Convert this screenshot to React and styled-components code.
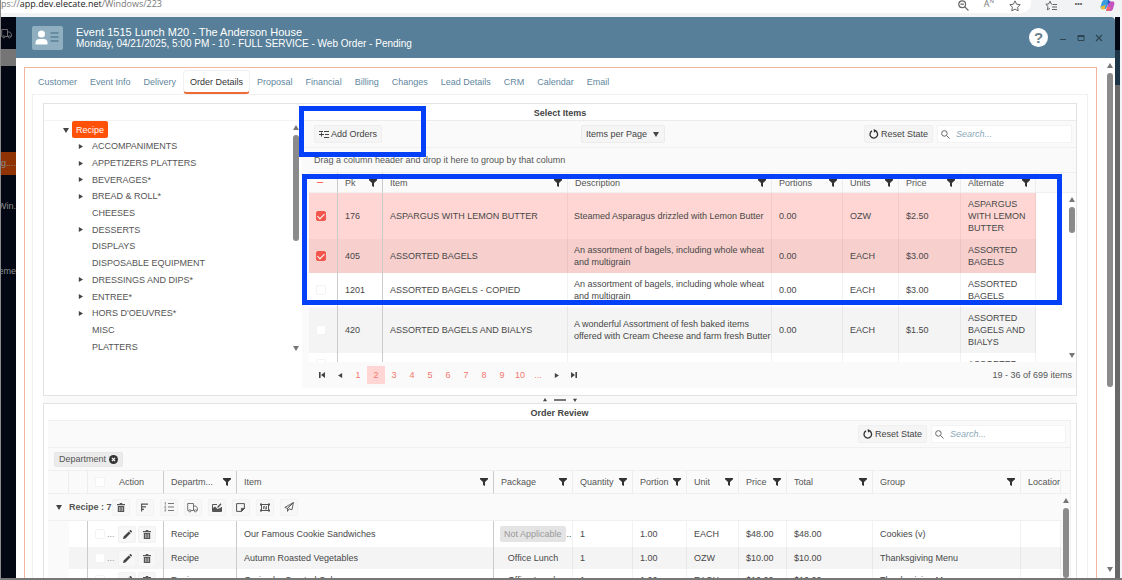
import React from "react";
import styled, { createGlobalStyle, css } from "styled-components";

const GlobalStyle = createGlobalStyle`
  * {
    box-sizing: border-box;
  }
  body {
    margin: 0;
    font-family: "Liberation Sans", Arial, sans-serif;
    font-size: 9px;
    line-height: 12px;
    color: #555;
    background: #fff;
  }
  button, input, select {
    font: inherit;
    color: inherit;
  }
`;

const tabs = [
  "Customer",
  "Event Info",
  "Delivery",
  "Order Details",
  "Proposal",
  "Financial",
  "Billing",
  "Changes",
  "Lead Details",
  "CRM",
  "Calendar",
  "Email",
];

const categories = [
  { name: "ACCOMPANIMENTS", open: true },
  { name: "APPETIZERS PLATTERS", open: true },
  { name: "BEVERAGES*", open: true },
  { name: "BREAD & ROLL*", open: true },
  { name: "CHEESES" },
  { name: "DESSERTS", open: true },
  { name: "DISPLAYS" },
  { name: "DISPOSABLE EQUIPMENT" },
  { name: "DRESSINGS AND DIPS*", open: true },
  { name: "ENTREE*", open: true },
  { name: "HORS D'OEUVRES*", open: true },
  { name: "MISC" },
  { name: "PLATTERS" },
];

const items = [
  {
    pk: "176",
    item: "ASPARGUS WITH LEMON BUTTER",
    description: ["Steamed Asparagus drizzled with Lemon Butter"],
    units: "OZW",
    price: "$2.50",
    alternate: ["ASPARGUS", "WITH LEMON", "BUTTER"],
    selected: true,
  },
  {
    pk: "405",
    item: "ASSORTED BAGELS",
    description: ["An assortment of bagels, including whole wheat", "and multigrain"],
    units: "EACH",
    price: "$3.00",
    alternate: ["ASSORTED", "BAGELS"],
    selected: true,
  },
  {
    pk: "1201",
    item: "ASSORTED BAGELS - COPIED",
    description: ["An assortment of bagels, including whole wheat", "and multigrain"],
    units: "EACH",
    price: "$3.00",
    alternate: ["ASSORTED", "BAGELS"],
  },
  {
    pk: "420",
    item: "ASSORTED BAGELS AND BIALYS",
    description: ["A wonderful Assortment of fesh baked items", "offered with Cream Cheese and farm fresh Butter"],
    units: "EACH",
    price: "$1.50",
    alternate: ["ASSORTED", "BAGELS AND", "BIALYS"],
  },
  { pk: "", item: "", description: [], units: "", price: "", alternate: ["ASSORTED"] },
];

const orders = [
  { item: "Our Famous Cookie Sandwiches", unit: "EACH", price: "$48.00", group: "Cookies (v)", locked: true },
  { item: "Autumn Roasted Vegetables", unit: "OZW", price: "$10.00", group: "Thanksgiving Menu" },
  { item: "Grains by Crusted Cakes", unit: "EACH", price: "$10.00", group: "Thanksgiving Menu" },
];

const pages = ["1", "2", "3", "4", "5", "6", "7", "8", "9", "10", "..."];

/* icons */

const FilterIcon = () => (
  <svg width="8" height="8" viewBox="0 0 8 8" fill="#333" aria-hidden="true">
    <path d="M0 0h8v1.2L5 4v4L3 7V4L0 1.2z" />
  </svg>
);

const Caret = ({ dir = "right", size = 5, color = "#444" }) => {
  const paths = {
    right: "M1 0l5 3-5 3z",
    left: "M5 0L0 3l5 3z",
    down: "M0 1h6L3 6z",
    up: "M0 5h6L3 0z",
  };
  return (
    <svg width={size} height={size} viewBox="0 0 6 6" fill={color} aria-hidden="true">
      <path d={paths[dir]} />
    </svg>
  );
};

const EndIcon = ({ flip }) => (
  <svg width="6" height="6" viewBox="0 0 6 6" fill="#444" aria-hidden="true">
    <path d={flip ? "M0 0l4 3-4 3zM4.4 0H6v6H4.4z" : "M6 0L2 3l4 3zM0 0h1.6v6H0z"} />
  </svg>
);

const ResetIcon = () => (
  <svg width="10" height="10" viewBox="0 0 10 10" fill="none" stroke="#333" strokeWidth="1.3" aria-hidden="true">
    <path d="M6.6 1.9A3.8 3.8 0 1 1 3 1.9" />
    <path d="M4.6 0L7.6 1.6 5 3.8z" fill="#333" stroke="none" />
  </svg>
);

const SearchIcon = ({ minus, size = 9 }) => (
  <svg width={size} height={size} viewBox="0 0 10 10" fill="none" stroke="#666" strokeWidth="1.1" aria-hidden="true">
    <circle cx="3.8" cy="3.8" r="3.1" />
    <path d={minus ? "M6.2 6.2L9.5 9.5M2.2 3.8h3.2" : "M6.2 6.2L9.5 9.5"} />
  </svg>
);

const AddIcon = () => (
  <svg width="10" height="9" viewBox="0 0 10 9" fill="none" stroke="#444" aria-hidden="true">
    <path d="M5 1.5h5M6 4.5h4M5 7.5h5M0 1.5h4M0 4.5h5" />
    <path d="M2.5 2.5v4" />
  </svg>
);

const TrashIcon = () => (
  <svg width="8" height="9" viewBox="0 0 8 9" aria-hidden="true">
    <path d="M0 1h2.5L3 0h2l.5 1H8v1.2H0zM.8 3h6.4v6H.8z" fill="#555" />
    <path d="M2.5 4v4M4 4v4M5.5 4v4" stroke="#ddd" strokeWidth=".6" />
  </svg>
);

const PencilIcon = () => (
  <svg width="9" height="9" viewBox="0 0 9 9" fill="#444" aria-hidden="true">
    <path d="M0 9l.6-2.4L5.8 1.4l1.8 1.8-5.2 5.2zM6.3.9L7.1.1c.3-.2.6-.1.8.1l.9.9c.2.2.2.5 0 .8l-.7.8z" />
  </svg>
);

const TruckIcon = ({ size = 11, color = "#666" }) => (
  <svg width={size} height={size} viewBox="0 0 11 11" fill="none" stroke={color} strokeWidth=".9" aria-hidden="true">
    <path d="M1.5 8.5H.7V1.5h5.8v7H4M6.5 4h2.3l1.6 2v2.5H9.6M6.5 8.5h.8" />
    <circle cx="2.8" cy="8.8" r="1.1" />
    <circle cx="8.4" cy="8.8" r="1.1" />
  </svg>
);

const SortIcon = () => (
  <svg width="9" height="9" viewBox="0 0 9 9" stroke="#555" strokeWidth="1.2" aria-hidden="true">
    <path d="M1 1.2h7M1 3.8h5M1 6.4h3M1.6 1v7.5" />
  </svg>
);

const ListIcon = () => (
  <svg width="10" height="10" viewBox="0 0 10 10" fill="none" stroke="#777" aria-hidden="true">
    <path d="M4 1.5h6M4 5h6M4 8.5h6" />
    <path d="M.5 1L1.5.5v2.3M.5 4h1.3L.6 5.8h1.5M.5 7.3h1.4L1 8.3c1.4.2.8 1.3-.4 1" strokeWidth=".7" />
  </svg>
);

const PictureIcon = () => (
  <svg width="10" height="9" viewBox="0 0 10 9" fill="none" stroke="#555" aria-hidden="true">
    <path d="M5 1.5H.5v7h9V4" />
    <path d="M1 8V5l2-1.5L5.5 6 9 4.500V8z" fill="#555" stroke="none" />
    <path d="M5.5 4.500L9 .8" strokeWidth="1.400" />
  </svg>
);

const NoteIcon = () => (
  <svg width="9" height="9" viewBox="0 0 9 9" fill="none" stroke="#555" aria-hidden="true">
    <path d="M.6.6h7.8v5L5.6 8.4h-5z" />
    <path d="M8.4 5.4H5.4v3z" fill="#555" />
  </svg>
);

const FrameIcon = () => (
  <svg width="10" height="9" viewBox="0 0 10 9" fill="none" stroke="#555" aria-hidden="true">
    <path d="M1.5 1.5h7v6h-7z" />
    <path d="M0 .5h2v2H0zM8 .5h2v2H8zM0 6.5h2v2H0zM8 6.5h2v2H8z" fill="#555" stroke="none" />
    <path d="M3.5 6V3.5h1.5V6h1.5V3" strokeWidth=".8" />
  </svg>
);

const SendIcon = () => (
  <svg width="10" height="10" viewBox="0 0 10 10" fill="none" stroke="#555" strokeWidth=".9" aria-hidden="true">
    <path d="M9.4.6L.8 5.4l2.5 1L9.4.6 8 7.8 5 6.8 3.5 9.4V6.4z" />
  </svg>
);

const CardIcon = () => (
  <svg width="31" height="24" viewBox="0 0 31 24" aria-hidden="true">
    <rect width="31" height="24" rx="2" fill="#8fafc1" />
    <circle cx="9.5" cy="8" r="3.5" fill="#fff" />
    <path d="M3.500 18.500v-2c0-2.500 2-3.500 4-3.500h4c2 0 4 1 4 3.500v2z" fill="#fff" />
    <path d="M18.500 7h8M18.500 11h8M18.500 15h8" stroke="#5b8198" strokeWidth="1.500" />
  </svg>
);

const StarIcon = ({ lines }) => (
  <svg width="12" height="12" viewBox="0 0 12 12" fill="none" stroke="#555" strokeWidth=".9" aria-hidden="true">
    <path
      d={
        lines
          ? "M7 4.2L6.2 3.9 5 1.2 3.7 3.9l-2.9.4L3 6.4l-.6 3.4L5 8.4M7.5 4.5H12M7 7h5M7 9.5h5"
          : "M6 .9l1.6 3.3 3.6.5-2.6 2.5.6 3.6L6 9.1l-3.2 1.7.6-3.6L.8 4.7l3.6-.5z"
      }
    />
  </svg>
);

const CopilotIcon = () => (
  <svg width="15" height="13" viewBox="0 2 15 13" aria-hidden="true">
    <path d="M4 2h5L7 9 5.5 11H2C0 11 .5 8 1.500 5.500 2 3.500 3 2 4 2z" fill="#3b9be0" />
    <path d="M1 8.500L5.500 7 4.500 11.500H2.500C1 11.500.6 10 1 8.500z" fill="#e9bd35" />
    <path d="M9.500 3.500H13c2 0 1.500 3 .5 5.500-.5 2.500-1.500 4-3 4H6l2-7z" fill="#c553c0" />
    <path d="M6 13l1.200-4h3.300l-1 4z" fill="#f0686a" />
    <path d="M8 2c1.500 0 1.500 1.500 2.500 1.700L8.500 6 7.500 7z" fill="#2a55c7" />
  </svg>
);

const ClearIcon = () => (
  <svg width="9" height="9" viewBox="0 0 9 9" aria-hidden="true">
    <circle cx="4.5" cy="4.5" r="4.5" fill="#333" />
    <path d="M2.900 2.900l3.200 3.200M6.100 2.900L2.900 6.100" stroke="#fff" strokeWidth="1.200" />
  </svg>
);

const Head = ({ children, filter = true, ...rest }) => (
  <HeadCell {...rest}>
    <HeadInner>
      <HeadLabel>{children}</HeadLabel>
      {filter && <FilterIcon />}
    </HeadInner>
  </HeadCell>
);

const Lines = ({ text }) => text.map((line) => <Line key={line}>{line}</Line>);

const ToolbarTools = ({ id }) => (
  <Tools>
    <ToolButton type="button">
      <ResetIcon />
      Reset State
    </ToolButton>
    <SearchLabel htmlFor={id}>
      <SearchIcon />
      <SearchInput id={id} type="search" placeholder="Search..." aria-label="Search" />
    </SearchLabel>
  </Tools>
);

function SelectItems() {
  return (
    <Pane>
      <PaneTitle>Select Items</PaneTitle>
      <Split>
        <TreePane>
          <Tree>
            <TreeNode>
              <Caret dir="down" size={6} />
              <Root type="button">Recipe</Root>
            </TreeNode>
            {categories.map(({ name, open }) => (
              <TreeNode key={name} $child>
                <CaretSlot>{open && <Caret />}</CaretSlot>
                {name}
              </TreeNode>
            ))}
          </Tree>
          <ScrollRail $width={12}>
            <Caret dir="up" size={6} color="#777" />
            <Thumb $height={106} />
            <Caret dir="down" size={6} color="#777" />
          </ScrollRail>
        </TreePane>
        <GridPane>
          <Toolbar>
            <ToolButton type="button">
              <AddIcon />
              Add Orders
            </ToolButton>
            <SelectWrap>
              <PageSelect aria-label="Items per Page">
                <option>Items per Page</option>
              </PageSelect>
              <Caret dir="down" size={6} />
            </SelectWrap>
            <ToolbarTools id="item-search" />
          </Toolbar>
          <GroupHint>Drag a column header and drop it here to group by that column</GroupHint>
          <ItemViewport>
            <Table>
              <colgroup>
                <Col $width={29} />
                <Col $width={45} />
                <Col />
                <Col $width={204} />
                <Col $width={71} />
                <Col $width={56} />
                <Col $width={62} />
                <Col $width={75} />
              </colgroup>
              <thead>
                <HeadRow>
                  <HeadCell $strong>
                    <Dash />
                  </HeadCell>
                  <Head $strong>Pk</Head>
                  <Head>Item</Head>
                  <Head>Description</Head>
                  <Head>Portions</Head>
                  <Head>Units</Head>
                  <Head>Price</Head>
                  <Head>Alternate</Head>
                </HeadRow>
              </thead>
              <tbody>
                {items.map((row, i) => (
                  <ItemRow key={i} $selected={row.selected} $alt={i % 2 === 1}>
                    <Cell $strong>
                      <Check type="checkbox" defaultChecked={row.selected} aria-label={row.item || "Item"} />
                    </Cell>
                    <Cell $strong>{row.pk}</Cell>
                    <Cell>{row.item}</Cell>
                    <Cell $tight>
                      <Lines text={row.description} />
                    </Cell>
                    <Cell>{row.pk && "0.00"}</Cell>
                    <Cell>{row.units}</Cell>
                    <Cell>{row.price}</Cell>
                    <Cell>
                      <Lines text={row.alternate} />
                    </Cell>
                  </ItemRow>
                ))}
              </tbody>
            </Table>
            <ItemRail>
              <RailHead />
              <ScrollRail $width={9}>
                <Caret dir="up" size={6} color="#777" />
                <Thumb $height={26} />
                <Caret dir="down" size={6} color="#777" />
              </ScrollRail>
            </ItemRail>
          </ItemViewport>
          <Pager>
            <PageButton type="button" aria-label="First page">
              <EndIcon />
            </PageButton>
            <PageButton type="button" aria-label="Previous page">
              <Caret dir="left" />
            </PageButton>
            {pages.map((page) => (
              <PageButton type="button" key={page} $current={page === "2"}>
                {page}
              </PageButton>
            ))}
            <PageButton type="button" aria-label="Next page">
              <Caret />
            </PageButton>
            <PageButton type="button" aria-label="Last page">
              <EndIcon flip />
            </PageButton>
            <PageInfo>19 - 36 of 699 items</PageInfo>
          </Pager>
        </GridPane>
      </Split>
    </Pane>
  );
}

function OrderReview() {
  return (
    <Pane $last>
      <PaneTitle>Order Review</PaneTitle>
      <ReviewGrid>
        <Toolbar $end>
          <ToolbarTools id="order-search" />
        </Toolbar>
        <ChipRow>
          <Chip type="button">
            Department
            <ClearIcon />
          </Chip>
        </ChipRow>
        <ReviewBody>
          <Table>
            <colgroup>
              <Col $width={21} />
              <Col $width={19} />
              <Col $width={76} />
              <Col $width={73} />
              <Col />
              <Col $width={79} />
              <Col $width={60} />
              <Col $width={54} />
              <Col $width={52} />
              <Col $width={48} />
              <Col $width={86} />
              <Col $width={148} />
              <Col $width={40} />
            </colgroup>
            <thead>
              <HeadRow $tall>
                <HeadCell />
                <HeadCell />
                <HeadCell $strong>
                  <Actions>
                    <Check type="checkbox" aria-label="Select all" />
                    <ActionTitle>Action</ActionTitle>
                  </Actions>
                </HeadCell>
                <Head $strong>Departm...</Head>
                <Head $strong>Item</Head>
                <Head>Package</Head>
                <Head>Quantity</Head>
                <Head>Portion</Head>
                <Head>Unit</Head>
                <Head>Price</Head>
                <Head>Total</Head>
                <Head>Group</Head>
                <Head $flush filter={false}>Location</Head>
              </HeadRow>
            </thead>
            <tbody>
              <tr>
                <GroupCell colSpan={13}>
                  <GroupBar>
                    <Caret dir="down" size={6} />
                    <GroupName>Recipe : 7</GroupName>
                    <GroupTools>
                      <IconButton type="button" aria-label="Delete"><TrashIcon /></IconButton>
                      <IconButton type="button" aria-label="Sort"><SortIcon /></IconButton>
                      <IconButton type="button" aria-label="List"><ListIcon /></IconButton>
                      <IconButton type="button" aria-label="Delivery"><TruckIcon /></IconButton>
                      <IconButton type="button" aria-label="Edit picture"><PictureIcon /></IconButton>
                      <IconButton type="button" aria-label="Note"><NoteIcon /></IconButton>
                      <IconButton type="button" aria-label="Group"><FrameIcon /></IconButton>
                      <IconButton type="button" aria-label="Send"><SendIcon /></IconButton>
                    </GroupTools>
                  </GroupBar>
                </GroupCell>
              </tr>
              {orders.map((row, i) => (
                <OrderRow key={row.item} $alt={i % 2 === 1} $tall={row.locked}>
                  <IndentCell />
                  <Cell $strong />
                  <Cell $strong>
                    <Actions>
                      <Check type="checkbox" aria-label={row.item} />
                      <Dots>...</Dots>
                      <IconButton type="button" aria-label="Edit"><PencilIcon /></IconButton>
                      <IconButton type="button" aria-label="Delete"><TrashIcon /></IconButton>
                    </Actions>
                  </Cell>
                  <Cell $strong>Recipe</Cell>
                  <Cell $strong>{row.item}</Cell>
                  <Cell $tight>
                    {row.locked ? (
                      <Package>
                        <Locked type="button" disabled>Not Applicable</Locked>..
                      </Package>
                    ) : (
                      <PackageText>Office Lunch</PackageText>
                    )}
                  </Cell>
                  <Cell>1</Cell>
                  <Cell>1.00</Cell>
                  <Cell>{row.unit}</Cell>
                  <Cell>{row.price}</Cell>
                  <Cell>{row.price}</Cell>
                  <Cell>{row.group}</Cell>
                  <Cell />
                </OrderRow>
              ))}
            </tbody>
          </Table>
          <ReviewRail>
            <RailHead $review />
            <ScrollRail $width={9}>
              <Caret dir="up" size={6} color="#777" />
              <Thumb />
            </ScrollRail>
          </ReviewRail>
        </ReviewBody>
      </ReviewGrid>
    </Pane>
  );
}

export default function App() {
  return (
    <>
      <GlobalStyle />
      <Page>
        <Browser>
          <Address>
            <span>ps://<Host>app.dev.elecate.net</Host>/Windows/223</span>
            <AddressIcons>
              <SearchIcon minus size={11} />
              <span>A<sup>N</sup></span>
              <StarIcon />
            </AddressIcons>
          </Address>
          <BrowserIcons>
            <StarIcon lines />
            <Ellipsis>•••</Ellipsis>
            <CopilotIcon />
          </BrowserIcons>
        </Browser>
        <Desktop>
          <Sidebar>
            <SideTop>
              <TruckIcon size={13} color="#777" />
            </SideTop>
            <SideStrip />
            <SideItem $gap={86} $active>g....</SideItem>
            <SideItem $gap={20}>Win.</SideItem>
            <SideItem $gap={42}>eme</SideItem>
          </Sidebar>
          <Window>
            <TitleBar>
              <CardIcon />
              <Titles>
                <EventName>Event 1515 Lunch M20 - The Anderson House</EventName>
                <EventMeta>Monday, 04/21/2025, 5:00 PM - 10 - FULL SERVICE - Web Order - Pending</EventMeta>
              </Titles>
              <Help type="button">?</Help>
              <WindowButton type="button" aria-label="Minimize">
                <svg width="8" height="8" viewBox="0 0 8 8" stroke="#2d4452"><path d="M1 5.500h6" /></svg>
              </WindowButton>
              <WindowButton type="button" aria-label="Maximize">
                <svg width="8" height="8" viewBox="0 0 8 8" fill="none" stroke="#2d4452"><path d="M1 1.500h6v5H1zM1 2.500h6" /></svg>
              </WindowButton>
              <WindowButton type="button" aria-label="Close">
                <svg width="8" height="8" viewBox="0 0 8 8" stroke="#2d4452" strokeWidth="1.200"><path d="M1 1l6 6M7 1L1 7" /></svg>
              </WindowButton>
            </TitleBar>
            <WindowBody>
              <Frame>
                <Tabs role="tablist">
                  {tabs.map((tab) => (
                    <Tab key={tab} type="button" role="tab" $active={tab === "Order Details"}>
                      {tab}
                    </Tab>
                  ))}
                </Tabs>
                <Panel>
                  <SelectItems />
                  <Splitter>
                    <Caret dir="up" size={4} />
                    <Grip />
                    <Caret dir="down" size={4} />
                  </Splitter>
                  <OrderReview />
                </Panel>
              </Frame>
              <ScrollRail $width={18} $tail>
                <Caret dir="up" size={6} color="#777" />
                <Thumb $height={314} />
                <Caret dir="down" size={6} color="#777" />
              </ScrollRail>
            </WindowBody>
          </Window>
          <Backdrop />
        </Desktop>
        <Highlight $left={299} $top={106} $right={696} $height={51} />
        <Highlight $left={302} $top={174} $right={60} $height={131} />
      </Page>
    </>
  );
}

/* page */

const Page = styled.div`
  position: relative;
  display: flex;
  flex-direction: column;
  height: 100vh;
  overflow: hidden;
  border-left: 1px solid #8b8b8b;
  border-bottom: 2px solid #777;
`;

const Highlight = styled.div`
  position: absolute;
  left: ${(p) => p.$left - 1}px;
  right: ${(p) => p.$right}px;
  top: ${(p) => p.$top}px;
  height: ${(p) => p.$height}px;
  border: 5px solid #0440f8;
  pointer-events: none;
`;

const Browser = styled.div`
  display: flex;
  flex: none;
  height: 17px;
  padding-bottom: 4px;
  background: #f1f3f5;
`;

const Address = styled.div`
  display: flex;
  flex: 1;
  align-items: flex-start;
  justify-content: space-between;
  padding-right: 10px;
  border-radius: 0 0 10px 0;
  background: #fff;
  color: #777;
  font-family: "Open Sans", sans-serif;
  font-size: 9px;
  line-height: 8px;
`;

const Host = styled.span`
  color: #222;
`;

const AddressIcons = styled.div`
  display: flex;
  align-items: flex-start;
  gap: 15px;

  sup {
    font-size: 6px;
    line-height: 0;
  }
`;

const BrowserIcons = styled.div`
  display: flex;
  align-items: flex-start;
  justify-content: space-between;
  width: 91px;
  padding: 0 7px 0 14px;
`;

const Ellipsis = styled.span`
  font-size: 7px;
  line-height: 8px;
`;

const Desktop = styled.div`
  display: flex;
  flex: 1;
  min-height: 0;
`;

const Sidebar = styled.nav`
  display: flex;
  flex: none;
  flex-direction: column;
  width: 15px;
  overflow: hidden;
  background: #020713;
`;

const SideTop = styled.div`
  display: flex;
  justify-content: flex-end;
  align-items: center;
  height: 32px;
  padding-right: 4px;
`;

const SideStrip = styled.div`
  height: 17px;
  background: #757575;
`;

const SideItem = styled.div`
  display: flex;
  justify-content: flex-end;
  margin-top: ${(p) => p.$gap}px;
  height: 23px;
  line-height: 23px;
  color: #8d8d8d;
  background: ${(p) => (p.$active ? "#8f3204" : "transparent")};
`;

const Window = styled.section`
  display: flex;
  flex: 1;
  flex-direction: column;
  min-width: 0;
  background: #fff;
`;

const Backdrop = styled.div`
  width: 7px;
  border-right: 2px solid #f3f6f8;
  background: linear-gradient(#020713 0 33px, #1d3446 33px 68px, #686868 68px);
`;

const TitleBar = styled.header`
  display: flex;
  flex: none;
  align-items: center;
  height: 41px;
  padding: 0 7px 0 16px;
  border-radius: 0 4px 0 0;
  background: #577f99;
`;

const Titles = styled.div`
  flex: 1;
  padding-left: 13px;
  color: #fff;
  line-height: 12px;
`;

const EventName = styled.div`
  font-size: 11px;
`;

const EventMeta = styled.div`
  font-size: 10px;
`;

const Help = styled.button`
  width: 19px;
  height: 19px;
  margin-right: 6px;
  padding: 0;
  border: 0;
  border-radius: 50%;
  background: #fff;
  color: #6d7f8a;
  font-size: 15px;
  font-weight: bold;
  line-height: 19px;
`;

const WindowButton = styled.button`
  display: flex;
  justify-content: center;
  width: 18px;
  padding: 0;
  border: 0;
  background: none;
`;

const WindowBody = styled.div`
  display: flex;
  flex: 1;
  min-height: 0;
  padding-left: 8px;
`;

const Frame = styled.div`
  display: flex;
  flex: 1;
  flex-direction: column;
  min-width: 0;
  margin-top: 9px;
  padding: 2px 8px 0 7px;
  border: 1px solid #f3b59d;
  border-bottom: 0;
`;

const Tabs = styled.div`
  display: flex;
  flex: none;
  gap: 1px;
  height: 24px;
`;

const Tab = styled.button`
  padding: 0 6px;
  border: 1px solid transparent;
  border-width: 1px 0 2px;
  background: none;
  color: #5f87a0;
  white-space: nowrap;
  ${(p) =>
    p.$active &&
    css`
      border: 1px solid #f1f1f1;
      border-bottom: 2px solid #ee6a35;
      border-radius: 4px;
      color: #333;
    `}
`;

const Panel = styled.div`
  display: flex;
  flex: 1;
  flex-direction: column;
  min-height: 0;
  padding: 8px 10px 0;
  border: 1px solid #f0f0f0;
  border-bottom: 0;
`;

const Pane = styled.section`
  display: flex;
  flex-direction: column;
  border: 1px solid #e3e3e3;
  ${(p) =>
    p.$last
      ? css`
          flex: 1;
          min-height: 0;
          padding: 0 5px 0 4px;
          border-bottom: 0;
        `
      : css`
          flex: none;
          padding-bottom: 7px;
        `}
`;

const PaneTitle = styled.h2`
  flex: none;
  height: 16px;
  margin: 0;
  color: #444;
  font-size: 9px;
  line-height: 18px;
  text-align: center;
`;

const Split = styled.div`
  display: flex;
`;

/* tree */

const TreePane = styled.div`
  display: flex;
  flex: none;
  width: 258px;
  height: 235px;
  border-top: 1px solid #f3f3f3;
`;

const Tree = styled.ul`
  display: flex;
  flex: 1;
  flex-direction: column;
  margin: 0;
  padding: 0 0 0 19px;
  list-style: none;
`;

const TreeNode = styled.li`
  display: flex;
  flex: 1;
  align-items: center;
  gap: ${(p) => (p.$child ? 8 : 3)}px;
  padding-left: ${(p) => (p.$child ? 15 : 0)}px;
`;

const CaretSlot = styled.span`
  display: flex;
  width: 6px;
`;

const Root = styled.button`
  height: 17px;
  padding: 0 4px;
  border: 0;
  border-radius: 2px;
  background: #ff5208;
  color: #fff;
`;

/* scroll rails */

const ScrollRail = styled.div`
  display: flex;
  flex: none;
  flex-direction: column;
  align-items: center;
  gap: 4px;
  width: ${(p) => p.$width}px;
  padding: ${(p) => (p.$tail ? "5px 0 6px 8px" : "4px 0")};

  svg:last-child {
    margin-top: auto;
  }
`;

const Thumb = styled.div`
  flex: ${(p) => (p.$height ? "none" : 1)};
  width: 6px;
  height: ${(p) => p.$height}px;
  border-radius: 3px;
  background: #8b8b8b;
`;

/* grids */

const GridPane = styled.div`
  flex: 1;
  min-width: 0;
  border-top: 1px solid #ececec;
  background: #fafafa;
`;

const Toolbar = styled.div`
  display: flex;
  flex: none;
  align-items: center;
  justify-content: ${(p) => (p.$end ? "flex-end" : "space-between")};
  height: 27px;
  padding: 0 4px 0 12px;
  border-bottom: 1px solid #f0f0f0;
`;

const Tools = styled.div`
  display: flex;
  gap: 4px;
`;

const ToolButton = styled.button`
  display: flex;
  align-items: center;
  gap: 2px;
  height: 18px;
  padding: 0 4px;
  border: 1px solid #efefef;
  border-radius: 2px;
  background: #f5f5f5;
  color: #444;
`;

const SelectWrap = styled.div`
  display: flex;
  align-items: center;
  height: 18px;
  padding-right: 5px;
  border: 1px solid #ebebeb;
  border-radius: 2px;
  background: #f5f5f5;
`;

const PageSelect = styled.select`
  width: 71px;
  padding: 0 0 0 4px;
  border: 0;
  appearance: none;
  background: none;
  color: #444;
`;

const SearchLabel = styled.label`
  display: flex;
  align-items: center;
  gap: 6px;
  width: 135px;
  height: 18px;
  padding-left: 3px;
  border: 1px solid #f3f3f3;
  background: #fff;
`;

const SearchInput = styled.input`
  flex: 1;
  min-width: 0;
  padding: 0;
  border: 0;
  background: none;

  &::placeholder {
    color: #8ba9b9;
    font-style: italic;
  }
`;

const GroupHint = styled.div`
  height: 24px;
  padding-left: 12px;
  line-height: 24px;
`;

const ItemViewport = styled.div`
  display: flex;
  height: 190px;
  margin-left: 7px;
  overflow: hidden;
  border-top: 1px solid #efefef;
  background: #fff;
`;

const Table = styled.table`
  flex: 1;
  width: 0;
  height: max-content;
  border-collapse: separate;
  border-spacing: 0;
  table-layout: fixed;
`;

const Col = styled.col`
  width: ${(p) => (p.$width ? p.$width + "px" : "auto")};
`;

const HeadRow = styled.tr`
  height: ${(p) => (p.$tall ? 23 : 20)}px;
  background: #fafafa;
`;

const cellLines = css`
  border-right: 1px solid ${(p) => (p.$strong ? "#cbcbcb" : "rgba(0, 0, 0, 0.05)")};
`;

const HeadCell = styled.th`
  padding: 0 ${(p) => (p.$flush ? 0 : 5)}px 0 7px;
  border-bottom: 1px solid #efefef;
  font-weight: normal;
  text-align: left;
  ${cellLines}
`;

const HeadInner = styled.div`
  display: flex;
  align-items: center;
  justify-content: space-between;
`;

const HeadLabel = styled.span`
  overflow: hidden;
  white-space: nowrap;
`;

const Dash = styled.div`
  width: 6px;
  height: 1px;
  margin-left: 1px;
  background: #ff6358;
`;

const Cell = styled.td`
  padding: ${(p) => (p.$tight ? "5px 0 5px 6px" : "5px 0 5px 7px")};
  overflow: hidden;
  color: #484848;
  white-space: nowrap;
  ${cellLines}
`;

const Line = styled.div`
  white-space: nowrap;
`;

const rowColor = ({ $selected, $alt }) => {
  if ($selected) return $alt ? "#f7cfcd" : "#ffd6d3";
  return $alt ? "#f4f4f4" : "#fff";
};

const ItemRow = styled.tr`
  background: ${rowColor};
`;

const Check = styled.input`
  display: block;
  flex: none;
  width: 10px;
  height: 10px;
  margin: 0;
  border: 1px solid #f3f3f3;
  border-radius: 2px;
  appearance: none;
  background: #fff;

  &:checked {
    border-color: #f2564c;
    background: #f2564c;
  }

  &:checked::after {
    content: "";
    display: block;
    width: 3px;
    height: 6px;
    margin: 0 auto;
    border: solid #fff;
    border-width: 0 1px 1px 0;
    transform: rotate(45deg);
  }
`;

const ItemRail = styled.div`
  display: flex;
  flex: none;
  flex-direction: column;
  align-items: flex-end;
  width: 40px;

  ${ScrollRail} {
    flex: 1;
  }
`;

const RailHead = styled.div`
  flex: none;
  width: 100%;
  height: ${(p) => (p.$review ? 23 : 20)}px;
  border-bottom: 1px solid #efefef;
  background: #fafafa;
`;

const Pager = styled.div`
  display: flex;
  align-items: center;
  height: 26px;
  padding: 0 4px 0 11px;
`;

const PageButton = styled.button`
  display: flex;
  align-items: center;
  justify-content: center;
  width: 18px;
  height: 18px;
  padding: 0;
  border: 0;
  background: ${(p) => (p.$current ? "#ffd6d3" : "none")};
  color: #f5776e;
`;

const PageInfo = styled.span`
  margin-left: auto;
`;

const Splitter = styled.div`
  display: flex;
  flex: none;
  align-items: center;
  justify-content: center;
  gap: 7px;
  height: 7px;
  background: #fafafa;
`;

const Grip = styled.div`
  width: 12px;
  height: 2px;
  background: #777;
`;

/* order review */

const ReviewGrid = styled.div`
  display: flex;
  flex: 1;
  flex-direction: column;
  min-height: 0;
  border: 1px solid #f0f0f0;
  border-width: 1px 1px 0 0;
  background: #fafafa;
`;

const ChipRow = styled.div`
  display: flex;
  flex: none;
  align-items: center;
  height: 23px;
  padding-left: 6px;
  border-bottom: 1px solid #efefef;
`;

const Chip = styled.button`
  display: flex;
  align-items: center;
  gap: 3px;
  height: 15px;
  padding: 0 4px;
  border: 1px solid #e6e6e6;
  border-radius: 2px;
  background: #ebebeb;
`;

const ReviewBody = styled.div`
  display: flex;
  flex: 1;
  min-height: 0;
  overflow: hidden;
`;

const ReviewRail = styled.div`
  display: flex;
  flex: none;
  flex-direction: column;
  width: 9px;

  ${ScrollRail} {
    flex: 1;
    padding-bottom: 0;
  }
`;

const GroupCell = styled.td`
  height: 27px;
  padding: 0 0 0 8px;
  border-bottom: 1px solid #f0f0f0;
`;

const GroupBar = styled.div`
  display: flex;
  align-items: center;
`;

const GroupName = styled.strong`
  margin-left: 7px;
  white-space: nowrap;
`;

const GroupTools = styled.div`
  display: flex;
  gap: 6px;
`;

const IconButton = styled.button`
  display: flex;
  flex: none;
  align-items: center;
  justify-content: center;
  width: 18px;
  height: 17px;
  padding: 0;
  border: 1px solid #f2f2f2;
  border-radius: 2px;
  background: #f7f7f7;
`;

const OrderRow = styled.tr`
  height: ${(p) => (p.$tall ? 26 : 22)}px;
  background: ${rowColor};

  td {
    padding-top: 0;
    padding-bottom: 0;
  }
`;

const IndentCell = styled.td`
  background: #fafafa;
`;

const Actions = styled.div`
  display: flex;
  align-items: center;
  gap: 2px;
`;

const ActionTitle = styled.span`
  margin-left: 12px;
`;

const Dots = styled.span`
  width: 9px;
  color: #999;
`;

const Package = styled.div`
  display: flex;
  align-items: center;
  gap: 1px;
`;

const PackageText = styled.div`
  padding-right: 6px;
  text-align: center;
`;

const Locked = styled.button`
  height: 16px;
  padding: 0 4px;
  border: 0;
  border-radius: 2px;
  background: #e4e4e4;
  color: #9a9a9a;
  white-space: nowrap;
`;
